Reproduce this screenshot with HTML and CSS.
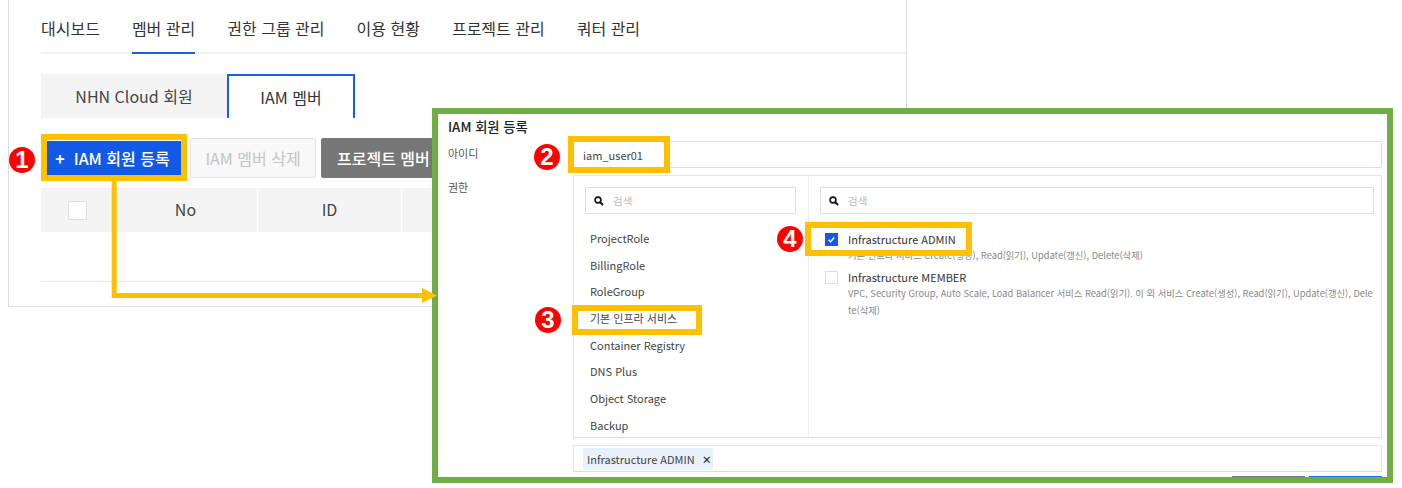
FILE: index.html
```html
<!DOCTYPE html>
<html lang="ko">
<head>
<meta charset="utf-8">
<title>IAM 회원 등록</title>
<link rel="stylesheet" href="styles.css">
</head>
<body>
<section class="card">
  <nav class="nav">
    <a class="nav-item">대시보드</a>
    <a class="nav-item active">멤버 관리</a>
    <a class="nav-item">권한 그룹 관리</a>
    <a class="nav-item">이용 현황</a>
    <a class="nav-item">프로젝트 관리</a>
    <a class="nav-item">쿼터 관리</a>
  </nav>
  <div class="tabs">
    <div class="tab">NHN Cloud 회원</div>
    <div class="tab selected">IAM 멤버</div>
  </div>
  <div class="toolbar">
    <button class="btn primary"><span class="plus">+</span>IAM 회원 등록</button>
    <button class="btn disabled">IAM 멤버 삭제</button>
    <button class="btn gray">프로젝트 멤버</button>
  </div>
  <div class="thead">
    <div class="th check-col"><span class="checkbox large"></span></div>
    <div class="th no-col">No</div>
    <div class="th id-col">ID</div>
    <div class="th fill-col"></div>
  </div>
  <div class="empty-row"></div>
</section>

<section class="modal">
  <h2 class="modal-title">IAM 회원 등록</h2>
  <div class="form">
    <div class="label">아이디</div>
    <div class="input">iam_user01</div>
    <div class="label label-perm">권한</div>
    <div class="panel">
      <div class="col-left">
        <div class="search">
          <svg class="search-icon" viewBox="0 0 10 10"><circle cx="4" cy="4" r="2.9" fill="none" stroke="#111" stroke-width="1.6"/><path d="M6 6l3 3" stroke="#111" stroke-width="2"/></svg>
          <span>검색</span>
        </div>
        <ul class="list">
          <li>ProjectRole</li>
          <li>BillingRole</li>
          <li>RoleGroup</li>
          <li>기본 인프라 서비스</li>
          <li>Container Registry</li>
          <li>DNS Plus</li>
          <li>Object Storage</li>
          <li>Backup</li>
        </ul>
      </div>
      <div class="col-right">
        <div class="search">
          <svg class="search-icon" viewBox="0 0 10 10"><circle cx="4" cy="4" r="2.9" fill="none" stroke="#111" stroke-width="1.6"/><path d="M6 6l3 3" stroke="#111" stroke-width="2"/></svg>
          <span>검색</span>
        </div>
        <div class="role first">
          <span class="checkbox checked"><svg viewBox="0 0 12 12"><path d="M2.8 6.2l2.2 2.2 4-4.6" fill="none" stroke="#fff" stroke-width="1.6"/></svg></span>
          <div class="role-text">
            <div class="role-name">Infrastructure ADMIN</div>
            <div class="role-desc">기본 인프라 서비스 Create(생성), Read(읽기), Update(갱신), Delete(삭제)</div>
          </div>
        </div>
        <div class="role">
          <span class="checkbox"></span>
          <div class="role-text">
            <div class="role-name">Infrastructure MEMBER</div>
            <div class="role-desc">VPC, Security Group, Auto Scale, Load Balancer 서비스 Read(읽기). 이 외 서비스 Create(생성), Read(읽기), Update(갱신), Delete(삭제)</div>
          </div>
        </div>
      </div>
    </div>
    <div class="tagbox wide">
      <span class="tag">Infrastructure ADMIN<span class="tag-x">×</span></span>
    </div>
    <div class="actions wide">
      <span class="act act-gray"></span>
      <span class="act act-blue"></span>
    </div>
  </div>
</section>

<div class="hl hl-btn"></div>
<div class="hl hl-input"></div>
<div class="hl hl-item"></div>
<div class="hl hl-role"></div>

<svg class="connector" viewBox="0 0 1402 488">
  <path d="M114.200 181V295.500H424" fill="none" stroke="#ffc000" stroke-width="5"/>
  <path d="M422 288L437 295.500L422 303z" fill="#ffc000"/>
</svg>

<span class="badge b1">1</span>
<span class="badge b2">2</span>
<span class="badge b3">3</span>
<span class="badge b4">4</span>
</body>
</html>
```

FILE: styles.css
```css
* { box-sizing: border-box; }
html, body { margin: 0; padding: 0; }
body {
  width: 1402px;
  height: 488px;
  overflow: hidden;
  position: relative;
  background: #fff;
  font-family: "Noto Sans CJK KR", "Noto Sans", sans-serif;
  color: #333;
}

/* background page */
.card {
  margin-left: 8px;
  width: 899px;
  height: 307px;
  border: 1px solid #ddd;
  border-top: 0;
  padding-left: 32px;
}
.nav {
  display: flex;
  gap: 32px;
  height: 54px;
  border-bottom: 2px solid #f2f2f2;
}
.nav-item {
  font-size: 16px;
  line-height: 56px;
  height: 54px;
  color: #333;
  white-space: nowrap;
}
.nav-item.active { border-bottom: 2px solid #1a5fe0; }
.tabs { display: flex; margin-top: 20px; height: 44px; }
.tab {
  display: flex;
  align-items: center;
  justify-content: center;
  font-size: 16px;
  width: 186px;
  background: #f4f4f4;
  color: #444;
}
.tab.selected {
  width: 128px;
  background: #fff;
  border: 2px solid #1a5fe0;
  border-bottom: 0;
  color: #333;
}
.toolbar { display: flex; align-items: center; margin-top: 20px; height: 40px; }
.btn {
  font-family: inherit;
  font-size: 16px;
  border: 0;
  padding: 0;
  white-space: nowrap;
}
.primary {
  width: 135px;
  height: 35px;
  margin-left: 6px;
  padding-right: 4px;
  background: #1259e6;
  color: #fff;
  font-weight: 500;
}
.plus { margin-right: 9px; font-weight: 700; }
.disabled {
  width: 126px;
  height: 40px;
  margin-left: 8px;
  background: #f8f8f8;
  border: 1px solid #e4e4e4;
  border-radius: 2px;
  color: #c4c4c4;
}
.gray {
  width: 170px;
  height: 40px;
  margin-left: 5px;
  padding-left: 16px;
  text-align: left;
  background: #777;
  color: #fff;
  font-weight: 500;
  border-radius: 2px;
}
.thead { display: flex; gap: 1px; margin-top: 10px; height: 44px; }
.th {
  display: flex;
  align-items: center;
  justify-content: center;
  background: #f4f4f4;
  font-size: 16px;
  line-height: 42px;
  padding-bottom: 2px;
  color: #444;
}
.check-col { width: 72px; padding-bottom: 0; }
.no-col { width: 143px; }
.id-col { width: 143px; }
.fill-col { flex: 1; }
.empty-row { height: 50px; border-bottom: 1px solid #e6e6e6; }

.checkbox {
  display: block;
  flex: none;
  width: 13px;
  height: 13px;
  background: #fff;
  border: 1px solid #ddd;
}
.checkbox.large { width: 19px; height: 19px; border-radius: 1px; }
.checkbox.checked { background: #1259e6; border-color: #1259e6; }
.checkbox svg { display: block; width: 100%; height: 100%; }

/* modal */
.modal {
  position: absolute;
  left: 432px;
  top: 108px;
  width: 961px;
  height: 375px;
  border: 6px solid #70ad47;
  background: #fff;
  padding: 0 5px 0 10px;
  overflow: hidden;
}
.modal-title {
  margin: 0;
  height: 27px;
  font-size: 13.300px;
  line-height: 26px;
  font-weight: 500;
  color: #222;
}
.form {
  display: grid;
  grid-template-columns: 125px 1fr;
  row-gap: 7px;
}
.label { font-size: 11px; line-height: 25px; color: #555; }
.label-perm { line-height: 25px; }
.input {
  height: 27px;
  border: 1px solid #ddd;
  border-radius: 1px;
  padding-left: 9px;
  font-size: 11px;
  line-height: 26px;
  color: #444;
}
.panel {
  height: 263px;
  display: grid;
  grid-template-columns: 235px 1fr;
  border: 1px solid #e6e6e6;
  border-bottom-color: #ddd;
  overflow: hidden;
}
.col-left { padding: 11px 12px 0 11px; border-right: 1px solid #eee; }
.col-right { padding: 11px 7px 0 11px; }
.search {
  display: flex;
  align-items: center;
  gap: 9px;
  height: 27px;
  padding-left: 8px;
  border: 1px solid #ddd;
  border-radius: 1px;
  font-size: 10.500px;
  color: #bbb;
}
.search-icon { width: 10px; height: 10px; flex: none; }
.list { list-style: none; margin: 11px 0 0; padding: 0 0 0 5px; }
.list li {
  height: 26.700px;
  font-size: 11px;
  line-height: 26.700px;
  color: #444;
  white-space: nowrap;
}
.role { display: flex; gap: 10px; padding-left: 5px; }
.role.first { margin-top: 19px; height: 38px; }
.role .checkbox { margin-top: 0; }
.role-name { font-size: 11px; line-height: 12px; color: #333; }
.role-desc {
  margin-top: 2px;
  font-size: 9.300px;
  line-height: 17px;
  color: #888;
  word-break: break-all;
  width: 526px;
}
.wide { grid-column: 2; }
.tagbox {
  height: 27px;
  border: 1px solid #e6e6e6;
  border-bottom-color: #ddd;
  padding: 2px 9px;
  display: flex;
}
.tag {
  display: flex;
  align-items: center;
  width: 130px;
  height: 22px;
  padding-left: 4px;
  background: #e8f0fc;
  border-radius: 2px;
  font-size: 11px;
  color: #444;
}
.tag-x { margin-left: 7px; font-size: 10px; font-weight: 700; color: #222; }
.actions {
  display: flex;
  justify-content: flex-end;
  gap: 4px;
  margin-top: -3px;
}
.act { display: block; width: 73px; height: 30px; }
.act-gray { background: #777; }
.act-blue { background: #1a73e8; }

/* annotations */
.hl {
  position: absolute;
  border: 6px solid #ffc000;
  pointer-events: none;
}
.hl-btn { left: 41px; top: 134px; width: 146px; height: 47px; }
.hl-input { left: 568px; top: 136px; width: 102px; height: 37px; }
.hl-item { left: 572px; top: 305px; width: 130px; height: 30px; }
.hl-role { left: 805px; top: 222px; width: 167px; height: 34px; }
.connector { position: absolute; left: 0; top: 0; width: 1402px; height: 488px; pointer-events: none; }
.badge {
  position: absolute;
  width: 26px;
  height: 26px;
  border-radius: 50%;
  background: #f00;
  color: #fff;
  font-family: "Liberation Sans", sans-serif;
  font-weight: 700;
  font-size: 24px;
  line-height: 26px;
  text-align: center;
}
.b1 { left: 9px; top: 147px; }
.b2 { left: 534px; top: 144px; }
.b3 { left: 535px; top: 307px; }
.b4 { left: 777px; top: 226px; }
```
